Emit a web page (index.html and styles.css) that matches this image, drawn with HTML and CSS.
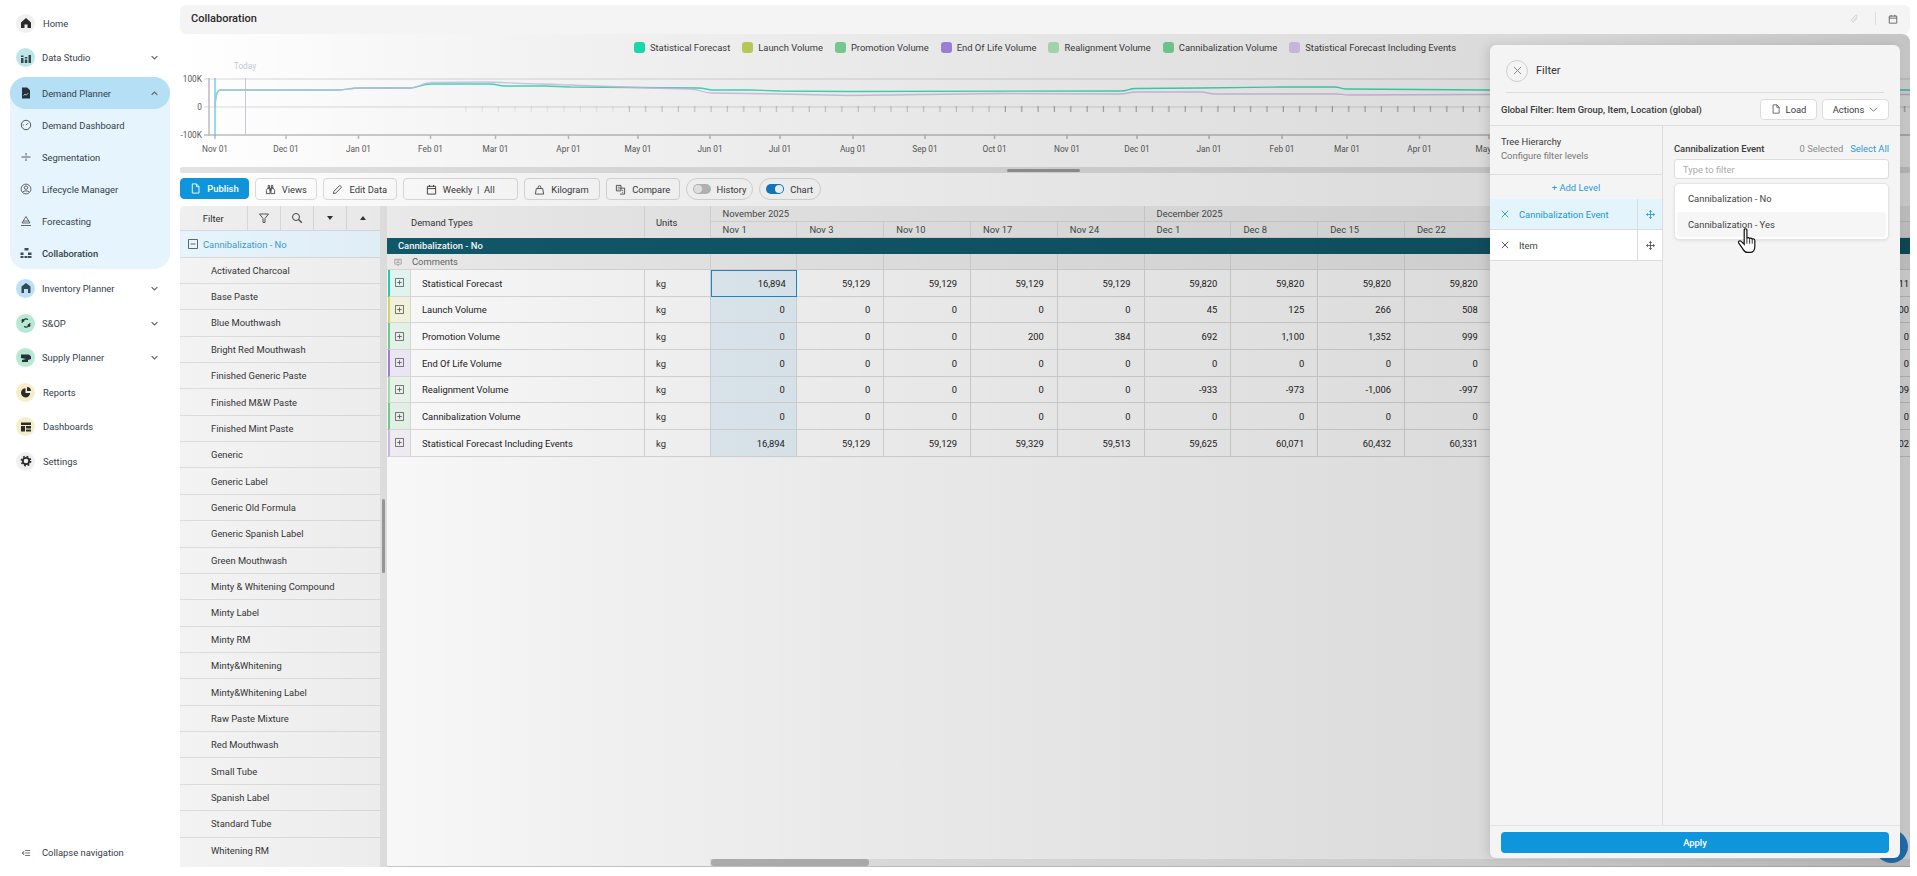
FILE: index.html
```html
<!DOCTYPE html>
<html lang="en">
<head>
<meta charset="utf-8">
<title>Collaboration</title>
<link rel="stylesheet" href="styles.css">
</head>
<body>
<svg class="defs" aria-hidden="true">
  <symbol id="i-doc" viewBox="0 0 12 12"><path d="M2.500 1h4.600L9.800 3.800V11h-7.300zM7 1v3h2.800" fill="none" stroke="currentColor"/></symbol>
  <symbol id="i-binoc" viewBox="0 0 12 12"><path d="M3.500 1.500h1.500v3H3.500zM7 1.500h1.500v3H7zM3 4.500h2.500v6H1.500V7zM6.500 4.500H9L10.500 7v3.500h-4zM5.500 5.500h1v2h-1z" fill="none" stroke="currentColor" stroke-width=".9"/></symbol>
  <symbol id="i-pencil" viewBox="0 0 12 12"><path d="M1.500 10.500l.6-2.600L8.500 1.500l2 2-6.400 6.400z" fill="none" stroke="currentColor" stroke-width=".9"/></symbol>
  <symbol id="i-cal" viewBox="0 0 12 12"><path d="M1.500 2.500h9v8.500h-9zM1.500 5h9M3.800 1v2M8.200 1v2" fill="none" stroke="currentColor"/></symbol>
  <symbol id="i-weight" viewBox="0 0 12 12"><path d="M2.500 5h7l1 6h-9zM4.500 5V3.500a1.500 1.500 0 0 1 3 0V5" fill="none" stroke="currentColor" stroke-width=".9"/></symbol>
  <symbol id="i-compare" viewBox="0 0 12 12"><path d="M1.500 1.500h5v6h-5zM5 4.500h5.500v6.500H5.500" fill="none" stroke="currentColor" stroke-width=".9"/><path d="M3 3.500h2M3 5.500h2M7.500 7h1.500M7.500 9h1.500" stroke="currentColor" stroke-width=".7"/></symbol>
  <symbol id="i-chev" viewBox="0 0 10 10"><path d="M1.800 3.500L5 6.500l3.200-3" fill="none" stroke="currentColor" stroke-width="1.400"/></symbol>
  <symbol id="i-chev-thin" viewBox="0 0 10 10"><path d="M1 3l4 4 4-4" fill="none" stroke="currentColor" stroke-width=".9"/></symbol>
  <symbol id="i-x" viewBox="0 0 10 10"><path d="M1 1l8 8M9 1l-8 8" fill="none" stroke="currentColor" stroke-width="1.100"/></symbol>
  <symbol id="i-move" viewBox="0 0 10 10"><path d="M5 .5v9M.5 5h9M3.500 2L5 .6 6.500 2M3.500 8L5 9.400 6.500 8M2 3.500L.6 5 2 6.500M8 3.500L9.400 5 8 6.500" fill="none" stroke="currentColor" stroke-width=".9"/></symbol>
  <symbol id="i-plus" viewBox="0 0 10 10"><path d="M.5.500h9v9h-9zM2.500 5h5M5 2.500v5" fill="none" stroke="currentColor" stroke-width=".9"/></symbol>
</svg>

<div class="app">
  <nav class="sidebar">
    <ul class="nav">
      <li class="nav-item nav-plain"><span class="nav-ic ic-grey"><svg viewBox="0 0 12 12"><path d="M6 1l5 4.500V11H7.500V7.500h-3V11H1V5.500z" fill="#2b2b2b"/></svg></span><span class="nav-label">Home</span></li>
      <li class="nav-item"><span class="nav-ic ic-teal"><svg viewBox="0 0 12 12"><path d="M1 6h2.500v5H1zM4.800 7.500h2.500V11H4.800zM8.500 3h2.500v8H8.500zM1 3.500h2.500v1.500H1zM4.800 5h2.500v1.500H4.800z" fill="#33494f"/></svg></span><span class="nav-label">Data Studio</span><svg class="chev"><use href="#i-chev"/></svg></li>
      <li class="nav-group">
        <div class="nav-item nav-head"><span class="nav-ic"><svg viewBox="0 0 12 12"><path d="M2 .5h5.200L10 3.300V11.500H2z" fill="#26323a"/><path d="M3.500 8.500l1.500-1.300 1.200 1 2-2" fill="none" stroke="#fff" stroke-width=".7"/></svg></span><span class="nav-label">Demand Planner</span><svg class="chev up"><use href="#i-chev"/></svg></div>
        <div class="nav-item nav-sub"><span class="nav-ic"><svg viewBox="0 0 12 12"><circle cx="6" cy="6" r="4.700" fill="none" stroke="#444" stroke-width=".9"/><path d="M6 6.200l2-2M2.800 6h1" stroke="#444" stroke-width=".9"/></svg></span><span class="nav-label">Demand Dashboard</span></div>
        <div class="nav-item nav-sub"><span class="nav-ic"><svg viewBox="0 0 12 12"><path d="M1.500 6h9M6 2v2.500M6 7.500V10" stroke="#444" stroke-width=".9"/></svg></span><span class="nav-label">Segmentation</span></div>
        <div class="nav-item nav-sub"><span class="nav-ic"><svg viewBox="0 0 12 12"><circle cx="6" cy="6" r="4.900" fill="none" stroke="#444" stroke-width=".8"/><circle cx="6" cy="4.700" r="1.700" fill="none" stroke="#444" stroke-width=".8"/><path d="M2.800 9c.8-1.500 5.600-1.500 6.400 0" fill="none" stroke="#444" stroke-width=".8"/></svg></span><span class="nav-label">Lifecycle Manager</span></div>
        <div class="nav-item nav-sub"><span class="nav-ic"><svg viewBox="0 0 12 12"><path d="M6 1.500L10 8H2zM1 10.500h10M3 6h6" fill="none" stroke="#444" stroke-width=".8"/></svg></span><span class="nav-label">Forecasting</span></div>
        <div class="nav-item nav-sub nav-current"><span class="nav-ic"><svg viewBox="0 0 12 12"><path d="M4.500 1h4v2.500h-4zM.5 5.500h3V8h-3zM8 5.500h3.500V8H8zM.5 9h3v2h-3zM4.500 9h3v2h-3zM8 9h3.500v2H8z" fill="#3d4d57"/></svg></span><span class="nav-label">Collaboration</span></div>
      </li>
      <li class="nav-item"><span class="nav-ic ic-blue"><svg viewBox="0 0 12 12"><path d="M6 1l4.500 3.500V11h-9V4.500z" fill="#33495a"/><path d="M4 7h4v4H4z" fill="#bde0f5"/></svg></span><span class="nav-label">Inventory Planner</span><svg class="chev"><use href="#i-chev"/></svg></li>
      <li class="nav-item"><span class="nav-ic ic-green"><svg viewBox="0 0 12 12"><path d="M2 6a4 4 0 0 1 6-3.500M10 6a4 4 0 0 1-6 3.500" fill="none" stroke="#26323a" stroke-width="1.100"/><circle cx="3" cy="3.500" r="1.400" fill="#26323a"/><circle cx="9" cy="8.500" r="1.400" fill="#26323a"/></svg></span><span class="nav-label">S&amp;OP</span><svg class="chev"><use href="#i-chev"/></svg></li>
      <li class="nav-item"><span class="nav-ic ic-green"><svg viewBox="0 0 12 12"><path d="M1 2.500h8l2 2v2.500l-3 1v2H2V8l4-1-5-1z" fill="#26323a"/></svg></span><span class="nav-label">Supply Planner</span><svg class="chev"><use href="#i-chev"/></svg></li>
      <li class="nav-item nav-plain"><span class="nav-ic ic-sand"><svg viewBox="0 0 12 12"><path d="M5.500 2.200A4.600 4.600 0 1 0 10.200 7H5.500z" fill="#2b2b2b"/><path d="M7 1a4.200 4.200 0 0 1 4 4H7z" fill="#2b2b2b"/></svg></span><span class="nav-label">Reports</span></li>
      <li class="nav-item nav-plain"><span class="nav-ic ic-sand"><svg viewBox="0 0 12 12"><path d="M1 1.500h10V4H1zM1 5h4v5.500H1zM6 5h5v2.500H6zM6 8.500h5v2H6z" fill="#2b2b2b"/></svg></span><span class="nav-label">Dashboards</span></li>
      <li class="nav-item nav-plain"><span class="nav-ic ic-grey"><svg viewBox="0 0 12 12"><circle cx="6" cy="6" r="3.200" fill="none" stroke="#2b2b2b" stroke-width="1.800"/><circle cx="6" cy="6" r="4.600" fill="none" stroke="#2b2b2b" stroke-width="1.600" stroke-dasharray="1.800 1.810"/></svg></span><span class="nav-label">Settings</span></li>
    </ul>
    <div class="collapse-nav">
      <svg class="collapse-ic" viewBox="0 0 12 12"><path d="M5 6h6M5 3h6M5 9h6M4 3.500L1.500 6 4 8.500M1.500 6H4" fill="none" stroke="#444" stroke-width=".9"/></svg>
      <span class="nav-label">Collapse navigation</span>
    </div>
  </nav>

  <main class="main">
    <header class="titlebar">
      <h1 class="title">Collaboration</h1>
      <div class="title-tools">
        <svg class="clip" viewBox="0 0 12 12"><path d="M9.500 5.500L5.500 9.800a2 2 0 0 1-2.900-2.800l4.800-5a1.300 1.300 0 0 1 1.900 1.800L4.800 8" fill="none" stroke="currentColor" stroke-width=".8"/></svg>
        <span class="tool-sep"></span>
        <svg class="cal"><use href="#i-cal"/></svg>
      </div>
    </header>

    <section class="chart-wrap">
      <ul class="legend">
        <li class="lg"><i class="sw sw-1"></i>Statistical Forecast</li>
        <li class="lg"><i class="sw sw-2"></i>Launch Volume</li>
        <li class="lg"><i class="sw sw-3"></i>Promotion Volume</li>
        <li class="lg"><i class="sw sw-4"></i>End Of Life Volume</li>
        <li class="lg"><i class="sw sw-5"></i>Realignment Volume</li>
        <li class="lg"><i class="sw sw-6"></i>Cannibalization Volume</li>
        <li class="lg"><i class="sw sw-7"></i>Statistical Forecast Including Events</li>
      </ul>
      <svg class="chart" viewBox="180 60 1730 107" width="1730" height="107">
        <defs>
          <pattern id="ticks" x="0" y="106" width="16.350" height="6" patternUnits="userSpaceOnUse"><path d="M8 0v6" stroke="#8d8d9b" stroke-width="1"/></pattern>
        </defs>
        <text class="today" x="245" y="69" text-anchor="middle">Today</text>
        <path class="grid" d="M204 79H1910M204 107H1910"/>
        <rect x="450" y="106" width="170" height="6" fill="url(#ticks)" opacity=".2"/>
        <rect x="620" y="106" width="380" height="6" fill="url(#ticks)" opacity=".55"/>
        <rect x="1000" y="106" width="910" height="6" fill="url(#ticks)" opacity=".9"/>
        <path class="axis" d="M209 78V136M204 135H1910M215 135v4M286 135v4M358.500 135v4M430.500 135v4M495.500 135v4M568.500 135v4M638 135v4M710 135v4M780 135v4M853 135v4M925 135v4M994.500 135v4M1067 135v4M1137 135v4M1209 135v4M1282 135v4M1347 135v4M1419.500 135v4M1489 135v4"/>
        <path class="today-line" d="M245.500 78V135"/>
        <path class="now-line" d="M215 78V136"/>
        <path class="line-a" d="M215 106C216 94 217 90 221 90H336C345 90 350 88 360 88H410C418 88 420 84 432 84H490C497 84 498 86 505 86H545L570 87L698 88C706 88 706 90 714 90H750L780 91L850 91.500L1121 91C1128 91 1128 88.500 1136 88.500L1200 88L1280 87H1335C1340 87 1340 89 1346 89L1490 90L1910 90"/>
        <path class="line-b" d="M215 106C216 94 217 90 221 90H336C345 90 350 88 360 88H410C418 88 422 82.500 432 82.500L483 82C500 82 520 84 540 84S560 85 570 85L650 88L690 89C700 89 702 93 712 93L780 94L850 95.500L1000 93.500L1120 94C1128 94 1128 92 1136 92H1200C1208 92 1208 94 1216 94H1335C1342 94 1342 95 1350 95L1490 94.500L1910 94.500"/>
        <g class="ax-y"><text x="202" y="82" text-anchor="end">100K</text><text x="202" y="110" text-anchor="end">0</text><text x="202" y="138" text-anchor="end">-100K</text></g>
        <g class="ax-x" text-anchor="middle">
          <text x="215" y="152">Nov 01</text><text x="286" y="152">Dec 01</text><text x="358.500" y="152">Jan 01</text><text x="430.500" y="152">Feb 01</text><text x="495.500" y="152">Mar 01</text><text x="568.500" y="152">Apr 01</text><text x="638" y="152">May 01</text><text x="710" y="152">Jun 01</text><text x="780" y="152">Jul 01</text><text x="853" y="152">Aug 01</text><text x="925" y="152">Sep 01</text><text x="994.500" y="152">Oct 01</text><text x="1067" y="152">Nov 01</text><text x="1137" y="152">Dec 01</text><text x="1209" y="152">Jan 01</text><text x="1282" y="152">Feb 01</text><text x="1347" y="152">Mar 01</text><text x="1419.500" y="152">Apr 01</text><text x="1489" y="152">May 01</text>
        </g>
      </svg>
      <div class="chart-scroll"><span class="chart-thumb"></span></div>
    </section>

    <div class="toolbar">
      <button class="btn btn-primary w-publish"><svg class="bi"><use href="#i-doc"/></svg>Publish</button>
      <button class="btn w-views"><svg class="bi"><use href="#i-binoc"/></svg>Views</button>
      <button class="btn w-edit"><svg class="bi"><use href="#i-pencil"/></svg>Edit Data</button>
      <button class="btn w-weekly"><svg class="bi"><use href="#i-cal"/></svg>Weekly &nbsp;|&nbsp; All</button>
      <button class="btn w-kg"><svg class="bi"><use href="#i-weight"/></svg>Kilogram</button>
      <button class="btn w-compare"><svg class="bi"><use href="#i-compare"/></svg>Compare</button>
      <button class="btn chip w-history"><span class="switch"><i></i></span>History</button>
      <button class="btn chip w-chart"><span class="switch on"><i></i></span>Chart</button>
    </div>

    <div class="work">
      <aside class="tree">
        <div class="tree-head">
          <span class="th-cell th-filter">Filter</span>
          <span class="th-cell"><svg viewBox="0 0 12 12"><path d="M1.500 2h9L7 6.500V10.500H5V6.500z" fill="none" stroke="#444" stroke-width=".9"/></svg></span>
          <span class="th-cell"><svg viewBox="0 0 12 12"><circle cx="5" cy="5" r="3.500" fill="none" stroke="#444" stroke-width="1"/><path d="M7.500 7.500l3.300 3.300" stroke="#444" stroke-width="1.300"/></svg></span>
          <span class="th-cell"><span class="tri-down"></span></span>
          <span class="th-cell"><span class="tri-up"></span></span>
        </div>
        <div class="tree-sel"><svg class="minus" viewBox="0 0 10 10"><path d="M.5.500h9v9h-9zM2.500 5h5" fill="none" stroke="#555" stroke-width=".9"/></svg>Cannibalization - No</div>
        <ul class="tree-list">
          <li>Activated Charcoal</li><li>Base Paste</li><li>Blue Mouthwash</li><li>Bright Red Mouthwash</li><li>Finished Generic Paste</li><li>Finished M&amp;W Paste</li><li>Finished Mint Paste</li><li>Generic</li><li>Generic Label</li><li>Generic Old Formula</li><li>Generic Spanish Label</li><li>Green Mouthwash</li><li>Minty &amp; Whitening Compound</li><li>Minty Label</li><li>Minty RM</li><li>Minty&amp;Whitening</li><li>Minty&amp;Whitening Label</li><li>Raw Paste Mixture</li><li>Red Mouthwash</li><li>Small Tube</li><li>Spanish Label</li><li>Standard Tube</li><li>Whitening RM</li>
        </ul>
      </aside>
      <div class="gutter"><span class="gutter-thumb"></span></div>
      <div class="table-wrap">
        <div class="tbl">
          <div class="h h-types">Demand Types</div>
          <div class="h h-units">Units</div>
          <div class="h h-m h-nov">November 2025</div>
          <div class="h h-m h-dec">December 2025</div>
          <div class="h h-m h-jan"></div>
          <div class="h h-w">Nov 1</div><div class="h h-w">Nov 3</div><div class="h h-w">Nov 10</div><div class="h h-w">Nov 17</div><div class="h h-w">Nov 24</div><div class="h h-w">Dec 1</div><div class="h h-w">Dec 8</div><div class="h h-w">Dec 15</div><div class="h h-w">Dec 22</div><div class="h h-w"></div><div class="h h-w"></div>
          <div class="band">Cannibalization - No</div>
          <div class="h h-comm"><svg class="comm-ic" viewBox="0 0 10 10"><path d="M1 1h8v6H6L5 9 4 7H1zM3 3h4M3 5h4" fill="none" stroke="#777" stroke-width=".7"/></svg>Comments</div>
          <div class="h h-c"></div><div class="h h-c"></div><div class="h h-c"></div><div class="h h-c"></div><div class="h h-c"></div><div class="h h-c"></div><div class="h h-c"></div><div class="h h-c"></div><div class="h h-c"></div><div class="h h-c"></div><div class="h h-c"></div>

          <div class="name"><span class="ind ind-1"><svg class="plus"><use href="#i-plus"/></svg></span>Statistical Forecast</div><div class="unit">kg</div><div class="v now sel">16,894</div><div class="v">59,129</div><div class="v">59,129</div><div class="v">59,129</div><div class="v">59,129</div><div class="v">59,820</div><div class="v">59,820</div><div class="v">59,820</div><div class="v">59,820</div><div class="v"></div><div class="v">60,311</div>
          <div class="name"><span class="ind ind-2"><svg class="plus"><use href="#i-plus"/></svg></span>Launch Volume</div><div class="unit">kg</div><div class="v now">0</div><div class="v">0</div><div class="v">0</div><div class="v">0</div><div class="v">0</div><div class="v">45</div><div class="v">125</div><div class="v">266</div><div class="v">508</div><div class="v"></div><div class="v">1,100</div>
          <div class="name"><span class="ind ind-3"><svg class="plus"><use href="#i-plus"/></svg></span>Promotion Volume</div><div class="unit">kg</div><div class="v now">0</div><div class="v">0</div><div class="v">0</div><div class="v">200</div><div class="v">384</div><div class="v">692</div><div class="v">1,100</div><div class="v">1,352</div><div class="v">999</div><div class="v"></div><div class="v">0</div>
          <div class="name"><span class="ind ind-4"><svg class="plus"><use href="#i-plus"/></svg></span>End Of Life Volume</div><div class="unit">kg</div><div class="v now">0</div><div class="v">0</div><div class="v">0</div><div class="v">0</div><div class="v">0</div><div class="v">0</div><div class="v">0</div><div class="v">0</div><div class="v">0</div><div class="v"></div><div class="v">0</div>
          <div class="name"><span class="ind ind-5"><svg class="plus"><use href="#i-plus"/></svg></span>Realignment Volume</div><div class="unit">kg</div><div class="v now">0</div><div class="v">0</div><div class="v">0</div><div class="v">0</div><div class="v">0</div><div class="v">-933</div><div class="v">-973</div><div class="v">-1,006</div><div class="v">-997</div><div class="v"></div><div class="v">-1,009</div>
          <div class="name"><span class="ind ind-6"><svg class="plus"><use href="#i-plus"/></svg></span>Cannibalization Volume</div><div class="unit">kg</div><div class="v now">0</div><div class="v">0</div><div class="v">0</div><div class="v">0</div><div class="v">0</div><div class="v">0</div><div class="v">0</div><div class="v">0</div><div class="v">0</div><div class="v"></div><div class="v">0</div>
          <div class="name"><span class="ind ind-7"><svg class="plus"><use href="#i-plus"/></svg></span>Statistical Forecast Including Events</div><div class="unit">kg</div><div class="v now">16,894</div><div class="v">59,129</div><div class="v">59,129</div><div class="v">59,329</div><div class="v">59,513</div><div class="v">59,625</div><div class="v">60,071</div><div class="v">60,432</div><div class="v">60,331</div><div class="v"></div><div class="v">60,402</div>
        </div>
        <div class="table-scroll"><span class="table-thumb"></span></div>
      </div>
    </div>

    <span class="fab"></span>

    <div class="overlay">
      <section class="modal">
        <div class="m-head">
          <button class="m-close"><svg><use href="#i-x"/></svg></button>
          <h2 class="m-title">Filter</h2>
        </div>
        <div class="m-global">
          <span class="m-global-text">Global Filter: Item Group, Item, Location (global)</span>
          <button class="m-btn m-load"><svg class="bi"><use href="#i-doc"/></svg>Load</button>
          <button class="m-btn m-actions">Actions<svg class="m-chev"><use href="#i-chev-thin"/></svg></button>
        </div>
        <div class="m-body">
          <div class="m-left">
            <div class="m-tree-info">
              <div class="m-tree-title">Tree Hierarchy</div>
              <div class="m-tree-sub">Configure filter levels</div>
            </div>
            <div class="m-add">+ Add Level</div>
            <div class="lvl lvl-on"><svg class="lvl-x"><use href="#i-x"/></svg><span class="lvl-name">Cannibalization Event</span><span class="lvl-move"><svg><use href="#i-move"/></svg></span></div>
            <div class="lvl"><svg class="lvl-x"><use href="#i-x"/></svg><span class="lvl-name">Item</span><span class="lvl-move"><svg><use href="#i-move"/></svg></span></div>
          </div>
          <div class="m-right">
            <div class="m-r-head"><span class="m-r-title">Cannibalization Event</span><span class="m-count">0 Selected</span><span class="m-all">Select All</span></div>
            <input class="m-input" type="text" placeholder="Type to filter">
            <div class="m-drop">
              <div class="opt">Cannibalization - No</div>
              <div class="opt opt-hover">Cannibalization - Yes</div>
            </div>
            <svg class="hand" viewBox="0 0 20 24"><path d="M6.500 1.800c0-1.500 2.500-1.500 2.500 0V10c0-1.500 2.500-1.500 2.500.2 0-1.200 2.300-1.200 2.400.5.200-1 2.300-1 2.400.8v5.500c0 3-1.500 5.500-4.500 5.500H9.500c-2 0-3-1-4-2.800L1.500 14c-1-1.600 1-3 2.300-1.600l2.700 2.600z" fill="#fff" stroke="#111" stroke-width="1.100"/><path d="M9 10v4.500M11.500 10.200v4.300M13.900 10.700v3.800" stroke="#111" stroke-width=".8" fill="none"/></svg>
          </div>
        </div>
        <div class="m-foot"><button class="m-apply">Apply</button></div>
      </section>
    </div>
  </main>
</div>
</body>
</html>
```

FILE: styles.css
```css
* { box-sizing: border-box; }
html, body { margin: 0; height: 100%; }
body {
  background: #fff;
  font-family: Roboto, "Liberation Sans", sans-serif;
  font-size: 9.4px;
  color: #2b2b2b;
  overflow: hidden;
}
ul { list-style: none; margin: 0; padding: 0; }
button { font: inherit; color: inherit; }
.defs { position: absolute; width: 0; height: 0; }

.app { display: flex; height: 876px; }

/* Sidebar */
.sidebar { width: 180px; flex: none; position: relative; padding: 6px 10px 0; }
.nav-item { display: flex; align-items: center; height: 34.6px; padding-left: 6px; padding-right: 11px; }
.nav-label { flex: 1; padding-left: 7px; white-space: nowrap; color: #33404a; }
.nav-plain .nav-label { padding-left: 8px; }
.nav-ic { width: 19px; height: 19px; border-radius: 50%; flex: none; display: flex; align-items: center; justify-content: center; }
.nav-ic svg { width: 12px; height: 12px; }
.ic-grey { background: #f0f0f0; }
.ic-teal { background: #bfe6e6; }
.ic-blue { background: #bde0f5; }
.ic-green { background: #b7e8d2; }
.ic-sand { background: #f6eecb; }
.chev { width: 9px; height: 9px; color: #666; flex: none; }
.chev.up { transform: rotate(180deg); }
.nav-group { background: #e6f4fd; border-radius: 16px; margin: 2px 0 2px; }
.nav-head { background: #b5dff5; border-radius: 16px; height: 32px; }
.nav-sub { height: 32px; }
.nav-current .nav-label { font-weight: 500; }
.collapse-nav { position: absolute; left: 21px; top: 847px; display: flex; align-items: center; }
.collapse-ic { width: 10px; height: 10px; margin-right: 4px; }

/* Main */
.main { flex: none; width: 1730px; height: 867px; position: relative; padding-top: 5px; display: flex; flex-direction: column; }
.titlebar { height: 29px; flex: none; background: #f4f4f4; border-radius: 6px; display: flex; align-items: center; justify-content: space-between; padding: 0 12px 2px 11px; }
.title { margin: 0; font-size: 11px; font-weight: 500; color: #2a2a2a; }
.title-tools { display: flex; align-items: center; gap: 12px; color: #555; }
.clip { width: 9px; height: 9px; color: #bbb; }
.tool-sep { width: 1px; height: 13px; background: #ddd; margin-left: 4px; }
.cal { width: 10px; height: 10px; }

.chart-wrap { flex: none; }
.legend { height: 26px; display: flex; align-items: center; justify-content: center; gap: 12px; padding-top: 1px; }
.lg { display: flex; align-items: center; gap: 5px; color: #3d3d3d; white-space: nowrap; }
.sw { width: 11px; height: 11px; border-radius: 3px; display: block; }
.sw-1 { background: #1ce5b4; }
.sw-2 { background: #c6d660; }
.sw-3 { background: #7ed99a; }
.sw-4 { background: #a98bea; }
.sw-5 { background: #b3ebbd; }
.sw-6 { background: #7bdb9c; }
.sw-7 { background: #e3cdfb; }
.chart { display: block; }
.chart text { font-size: 8.3px; fill: #5a5a5a; font-family: Roboto, "Liberation Sans", sans-serif; }
.chart .today { fill: #c6cbd6; }
.grid { stroke: #e6e6e6; stroke-width: 1.5; fill: none; }
.axis { stroke: #bdbdbd; stroke-width: 1.5; fill: none; }
.today-line { stroke: #c9ccd6; stroke-width: 1; fill: none; }
.now-line { stroke: #4cc6ec; stroke-width: 1.2; fill: none; }
.line-a { stroke: #3fe0b8; stroke-width: 1.3; fill: none; }
.line-b { stroke: #cdb8ea; stroke-opacity: .8; stroke-width: 1.3; fill: none; }
.chart-scroll { height: 6px; background: #e2e2e2; position: relative; border-radius: 2px; }
.chart-thumb { position: absolute; left: 827px; width: 73px; top: 2px; height: 3px; background: #999; border-radius: 2px; }

.toolbar { flex: none; display: flex; gap: 6px; margin-top: 5px; height: 22px; }
.btn { height: 22px; padding: 0; display: inline-flex; align-items: center; justify-content: center; gap: 6px; background: #fff; border: 1px solid #dcdcdc; border-radius: 4px; color: #3a3a3a; white-space: nowrap; cursor: pointer; }
.bi { width: 11px; height: 11px; flex: none; }
.btn-primary { background: #0f95dc; border-color: #0f95dc; color: #fff; font-weight: 500; height: 21px; }
.chip { border-radius: 11px; }
.w-publish { width: 69px; }
.w-views { width: 61.5px; }
.w-edit { width: 74.5px; }
.w-weekly { width: 114.5px; }
.w-kg { width: 76px; }
.w-compare { width: 74.5px; }
.w-history { width: 67px; }
.w-chart { width: 61.5px; }
.switch { width: 18px; height: 10px; border-radius: 5px; background: #bdbdbd; position: relative; display: block; }
.switch i { position: absolute; left: 1px; top: 1px; width: 8px; height: 8px; border-radius: 50%; background: #eee; }
.switch.on { background: #0f7fc8; }
.switch.on i { left: 9px; background: #fff; }

.work { flex: 1; min-height: 0; margin-top: 6px; display: flex; }
.tree { width: 200px; flex: none; background: #f3f3f3; border-top-left-radius: 5px; overflow: hidden; }
.tree-head { height: 25px; display: grid; grid-template-columns: 67.5px 33px 33px 33px 33.5px; background: #efefef; border-bottom: 1px solid #d8d8d8; }
.th-cell { display: flex; align-items: center; justify-content: center; border-right: 1px solid #d8d8d8; }
.th-cell:last-child { border-right: 0; }
.th-cell svg { width: 12px; height: 12px; }
.tri-down, .tri-up { width: 0; height: 0; border-left: 3.5px solid transparent; border-right: 3.5px solid transparent; }
.tri-down { border-top: 4px solid #333; }
.tri-up { border-bottom: 4px solid #333; }
.tree-sel { height: 26.6px; display: flex; align-items: center; padding: 1px 0 0 7.5px; gap: 5.5px; background: #e6f4fd; color: #3a9bd6; border-bottom: 1px solid #d8d8d8; }
.minus { width: 10px; height: 10px; }
.tree-list li { height: 26.36px; display: flex; align-items: center; padding-left: 31px; border-bottom: 1px solid #dcdcdc; color: #333; }
.tree-list li:last-child { border-bottom: 0; }
.gutter { width: 7px; flex: none; background: #e2e2e2; position: relative; }
.gutter-thumb { position: absolute; left: 2px; width: 3px; top: 293px; height: 74px; background: #999; border-radius: 2px; }

.table-wrap { flex: 1; min-width: 0; background: #fff; overflow: hidden; position: relative; border-bottom: 1px solid #ccc; }
.tbl { display: grid; grid-template-columns: 258px 65.6px repeat(9, 86.8px) 345px 86.2px; grid-template-rows: 16px 16px 16px 16px repeat(7, 26.67px); }
.h { background: #f0f0f0; border-right: 1px solid #dcdcdc; border-bottom: 1px solid #dcdcdc; display: flex; align-items: center; color: #4a4a4a; padding-left: 12px; }
.h-types { grid-row: 1 / span 2; grid-column: 1; padding-left: 24px; color: #333; border-bottom: 0; }
.h-units { grid-row: 1 / span 2; grid-column: 2; padding-left: 11px; color: #333; border-bottom: 0; }
.h-nov { grid-column: 3 / span 5; }
.h-dec { grid-column: 8 / span 4; }
.h-jan { grid-column: 12 / span 2; }
.band { grid-column: 1 / -1; background: #115a6b; color: #fff; font-weight: 500; display: flex; align-items: center; padding: 0 0 1px 11px; }
.h-comm { grid-column: 1 / span 2; padding: 0 0 1px 7px; color: #666; gap: 10px; }
.comm-ic { width: 8px; height: 9px; margin-top: 2px; }
.name { display: flex; align-items: center; padding-top: 0; background: #fff; border-right: 1px solid #dcdcdc; box-shadow: inset 0 -1px 0 #dcdcdc; color: #222; }
.ind { width: 23px; height: 100%; flex: none; margin-left: 1px; margin-right: 11px; border-left: 2px solid; border-right: 1px solid #dcdcdc; border-bottom: 1px solid #dcdcdc; display: flex; align-items: center; padding-left: 5px; }
.plus { width: 9px; height: 9px; color: #555; }
.ind-1 { border-left-color: #1fd4a8; background: #e8fbf6; }
.ind-2 { border-left-color: #d8da68; background: #f8f9e2; }
.ind-3 { border-left-color: #76cc90; background: #ebf8ef; }
.ind-4 { border-left-color: #a081de; background: #f2edfa; }
.ind-5 { border-left-color: #a8deb3; background: #eef9f0; }
.ind-6 { border-left-color: #76cc90; background: #e8f7ec; }
.ind-7 { border-left-color: #cfbbe6; background: #f6f2fa; }
.unit { display: flex; align-items: center; padding: 1px 0 0 11px; border-right: 1px solid #dcdcdc; border-bottom: 1px solid #dcdcdc; color: #333; }
.v { display: flex; align-items: center; justify-content: flex-end; padding: 1px 13px 0 0; border-right: 1px solid #dcdcdc; border-bottom: 1px solid #dcdcdc; color: #222; }
.now { background: #e8f3fa; padding-right: 11.5px; }
.sel { border: 1.5px solid #1c8fd6; padding-right: 10.5px; }

.table-scroll { position: absolute; left: 323px; right: 0; bottom: 0; height: 7px; background: #ececec; }
.table-thumb { position: absolute; left: 1px; width: 158px; top: 0; height: 7px; background: #b8b8b8; border-radius: 3px; }

.fab { position: absolute; left: 1695px; top: 830px; width: 33px; height: 33px; border-radius: 50%; background: #2a86d6; }

/* Overlay + modal */
.overlay {
  position: absolute; left: 0; top: 34px; right: 0; bottom: 0;
  border-top-right-radius: 8px;
  background: linear-gradient(90deg, rgba(0,0,0,0) 0, rgba(0,0,0,.03) 220px, rgba(0,0,0,.06) 420px, rgba(0,0,0,.085) 700px, rgba(0,0,0,.14) 1300px, rgba(0,0,0,.23) 100%);
}
.modal {
  position: absolute; left: 1310px; top: 11px; width: 410px; height: 813px;
  background: #f4f4f4; border-radius: 6px; box-shadow: -4px 0 10px rgba(0,0,0,.1);
  display: flex; flex-direction: column;
}
.m-head { height: 48px; flex: none; margin: 0 16px; border-bottom: 1px solid #dcdcdc; display: flex; align-items: center; gap: 8px; padding-top: 4px; }
.m-close { width: 22px; height: 22px; border-radius: 50%; border: 1px solid #d0d0d0; background: transparent; padding: 0; display: flex; align-items: center; justify-content: center; color: #888; }
.m-close svg { width: 9px; height: 9px; }
.m-title { margin: 0; font-size: 11px; font-weight: 400; color: #333; }
.m-global { height: 33px; flex: none; display: flex; align-items: center; padding: 0 11px 0 11px; border-bottom: 1px solid #dcdcdc; }
.m-global-text { flex: 1; font-weight: 500; color: #3a3a3a; }
.m-btn { height: 21px; background: #fff; border: 1px solid #dcdcdc; border-radius: 4px; display: inline-flex; align-items: center; justify-content: center; gap: 5px; padding: 0; color: #3a3a3a; }
.m-load { width: 57px; margin-right: 5px; }
.m-load .bi { width: 10px; height: 10px; color: #555; }
.m-actions { width: 67px; }
.m-chev { width: 9px; height: 9px; color: #555; }
.m-body { flex: 1; display: flex; min-height: 0; }
.m-left { width: 173px; flex: none; border-right: 1px solid #dcdcdc; }
.m-tree-info { height: 49px; padding: 9px 11px 0; border-bottom: 1px solid #dcdcdc; line-height: 14px; }
.m-tree-title { color: #3a3a3a; }
.m-tree-sub { color: #777; }
.m-add { height: 24px; display: flex; align-items: center; justify-content: center; color: #2a9ad8; }
.lvl { height: 31px; display: flex; align-items: center; background: #fff; border-bottom: 1px solid #dcdcdc; color: #444; }
.lvl-on { background: #e3f4fd; color: #1d95d8; }
.lvl-x { width: 8px; height: 8px; margin-left: 11px; margin-right: 10px; flex: none; color: inherit; }
.lvl-name { flex: 1; }
.lvl-move { width: 25px; height: 100%; border-left: 1px solid #dcdcdc; display: flex; align-items: center; justify-content: center; flex: none; }
.lvl-move svg { width: 9px; height: 9px; }
.m-right { flex: 1; padding: 15px 11px 0 11px; position: relative; }
.m-r-head { display: flex; align-items: center; height: 14px; }
.m-r-title { flex: 1; font-weight: 500; color: #3a3a3a; }
.m-count { color: #8a8a8a; margin-right: 7px; }
.m-all { color: #2a9ad8; }
.m-input { display: block; width: 100%; height: 20px; margin-top: 4px; border: 1px solid #dcdcdc; border-radius: 3px; background: #fff; font: inherit; padding: 0 8px; outline: 0; }
.m-input::placeholder { color: #aaa; }
.m-drop { margin-top: 4px; height: 57px; background: #fff; border: 1px solid #e4e4e4; border-radius: 5px; padding: 2px; box-shadow: 0 1px 3px rgba(0,0,0,.08); }
.opt { height: 26px; display: flex; align-items: center; padding: 0 0 2px 11px; color: #444; }
.opt-hover { height: 25px; padding-bottom: 0; background: #f6f6f6; border-radius: 3px; }
.hand { position: absolute; left: 74px; top: 102px; width: 22px; height: 26px; }
.m-foot { height: 33px; flex: none; border-top: 1px solid #e4e4e4; padding: 6px 11px 0 11px; }
.m-apply { display: block; width: 100%; height: 21px; border: 0; border-radius: 4px; background: #0f95dc; color: #fff; font-weight: 500; padding: 0; }
```
